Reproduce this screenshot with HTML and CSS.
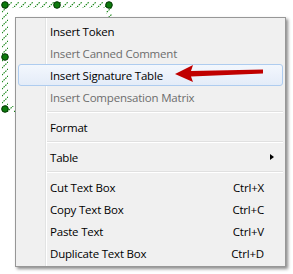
FILE: index.html
```html
<!DOCTYPE html>
<html lang="en">
<head>
    <meta charset="UTF-8">
    <title>Context menu</title>
    <link rel="stylesheet" href="styles.css">
</head>
<body>

<div class="canvas">
    <!-- selected text box on the design surface -->
    <svg class="frame" width="116" height="116" viewBox="0 0 116 116">
        <defs>
            <pattern id="hatch" width="7" height="7" patternUnits="userSpaceOnUse">
                <path d="M0 7 L7 0" stroke="#0a7f0a" stroke-width="1.1" stroke-dasharray="1.6 0.9"/>
            </pattern>
        </defs>
        <path d="M2 2 H112 V112 H2 Z M8 8 V106 H106 V8 Z" fill="url(#hatch)" fill-rule="evenodd"/>
        <g fill="#0c7a0c" stroke="#023402" stroke-width="1">
            <circle cx="5" cy="5" r="3.3"/>
            <circle cx="57" cy="5" r="3.3"/>
            <circle cx="109" cy="5" r="3.3"/>
            <circle cx="5" cy="57" r="3.3"/>
            <circle cx="109" cy="57" r="3.3"/>
            <circle cx="5" cy="109" r="3.3"/>
            <circle cx="57" cy="109" r="3.3"/>
            <circle cx="109" cy="109" r="3.3"/>
        </g>
    </svg>

    <!-- context menu -->
    <ul class="menu">
        <li class="item">Insert Token</li>
        <li class="item disabled">Insert Canned Comment</li>
        <li class="item active">Insert Signature Table</li>
        <li class="item disabled">Insert Compensation Matrix</li>
        <li class="sep"></li>
        <li class="item">Format</li>
        <li class="sep"></li>
        <li class="item">Table<span class="submenu"></span></li>
        <li class="sep"></li>
        <li class="item">Cut Text Box<span class="key">Ctrl+X</span></li>
        <li class="item">Copy Text Box<span class="key">Ctrl+C</span></li>
        <li class="item">Paste Text<span class="key">Ctrl+V</span></li>
        <li class="item">Duplicate Text Box<span class="key">Ctrl+D</span></li>
    </ul>

    <!-- red callout arrow -->
    <svg class="callout" width="100" height="30" viewBox="0 0 100 30">
        <polygon points="5,15 23,6 21,12 93,10.5 93,14.5 21,17.5 23,23" fill="#c00000"/>
    </svg>
</div>

</body>
</html>
```

FILE: styles.css
```css
body {
    margin: 0;
    background: #fff;
    font-family: "Open Sans", "Noto Sans", sans-serif;
    font-size: 11.5px;
    letter-spacing: -0.2px;
    overflow: hidden;
}
.canvas {
    position: relative;
    width: 293px;
    height: 274px;
}
.frame {
    position: absolute;
    left: 0;
    top: 0;
}
.menu {
    position: relative;
    list-style: none;
    box-sizing: border-box;
    width: 271px;
    margin: 0;
    margin-left: 15px;
    top: 17px;
    padding: 2px;
    border: 1px solid #979797;
    background-color: #f0f0f0;
    background-image: linear-gradient(to right, transparent 29px, #e2e3e3 29px, #e2e3e3 30px, #fff 30px, #fff 31px, transparent 31px);
    box-shadow: 2px 2px 3px rgba(0, 0, 0, 0.45);
}
.item {
    display: flex;
    align-items: center;
    justify-content: space-between;
    box-sizing: border-box;
    height: 22px;
    padding: 0 18px 0 31px;
    border: 1px solid transparent;
    border-radius: 3px;
    color: #000;
    white-space: nowrap;
}
.item.disabled {
    color: #6d6d6d;
}
.item.active {
    border-color: #aeccef;
    background: linear-gradient(#f3f7fd, #e4ecf8);
}
.sep {
    height: 8px;
    margin-left: 29px;
    background: linear-gradient(transparent 3px, #e0e0e0 3px, #e0e0e0 4px, #fff 4px, #fff 5px, transparent 5px);
}
.submenu {
    width: 0;
    height: 0;
    margin-right: -10px;
    border-left: 4px solid #000;
    border-top: 3.5px solid transparent;
    border-bottom: 3.5px solid transparent;
}
.callout {
    position: absolute;
    left: 170px;
    top: 59px;
}
```
